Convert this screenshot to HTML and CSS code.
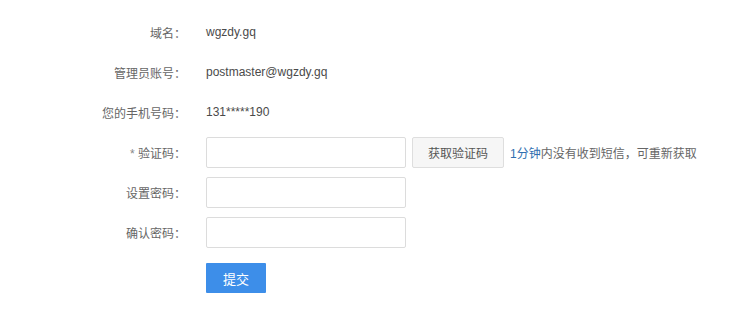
FILE: index.html
```html
<!DOCTYPE html>
<html lang="zh-CN">
<head>
<meta charset="utf-8">
<title>设置密码</title>
<link rel="stylesheet" href="styles.css">
</head>
<body>
<form class="form">
  <div class="row">
    <span class="label">域名：</span>
    <span class="value">wgzdy.gq</span>
  </div>
  <div class="row">
    <span class="label">管理员账号：</span>
    <span class="value">postmaster@wgzdy.gq</span>
  </div>
  <div class="row">
    <span class="label">您的手机号码：</span>
    <span class="value">131*****190</span>
  </div>
  <div class="row">
    <span class="label"><span class="req">*</span> 验证码：</span>
    <input class="field" type="text">
    <button class="code-btn" type="button">获取验证码</button>
    <span class="hint"><span class="link">1分钟</span>内没有收到短信，可重新获取</span>
  </div>
  <div class="row">
    <span class="label">设置密码：</span>
    <input class="field" type="password">
  </div>
  <div class="row">
    <span class="label">确认密码：</span>
    <input class="field" type="password">
  </div>
  <div class="row submit-row">
    <span class="label"></span>
    <button class="submit" type="button">提交</button>
  </div>
</form>
</body>
</html>
```

FILE: styles.css
```css
html, body {
  margin: 0;
  padding: 0;
  background: #ffffff;
}

body {
  font-family: "Liberation Sans", "Noto Sans CJK SC", sans-serif;
  font-size: 12px;
  color: #555;
}

.form {
  padding-top: 12px;
  display: flex;
  flex-direction: column;
}

.row {
  display: flex;
  align-items: center;
  height: 40px;
}

.label {
  width: 186px;
  text-align: right;
  color: #666;
  flex-shrink: 0;
  margin-right: 20px;
}

.req {
  color: #888;
}

.value {
  color: #4a4a4a;
}

.field {
  box-sizing: border-box;
  width: 200px;
  height: 31px;
  margin: 0;
  border: 1px solid #dcdcdc;
  border-radius: 2px;
  background: #fff;
  padding: 0 6px;
  font: inherit;
}

.code-btn {
  box-sizing: border-box;
  width: 92px;
  height: 31px;
  margin: 0 0 0 6px;
  padding: 0;
  border: 1px solid #dedede;
  border-radius: 2px;
  background: #f6f6f6;
  color: #555;
  font-family: "Noto Sans CJK SC", sans-serif;
  font-size: 12px;
}

.hint {
  margin-left: 6px;
  color: #666;
}

.link {
  color: #2f6fb0;
}

.submit-row {
  margin-top: 11px;
  height: 30px;
}

.submit {
  box-sizing: border-box;
  width: 60px;
  height: 30px;
  margin: 0;
  padding: 0;
  border: none;
  border-radius: 1px;
  background: #3d8ee9;
  color: #fff;
  font-family: "Noto Sans CJK SC", sans-serif;
  font-size: 13px;
}
```
